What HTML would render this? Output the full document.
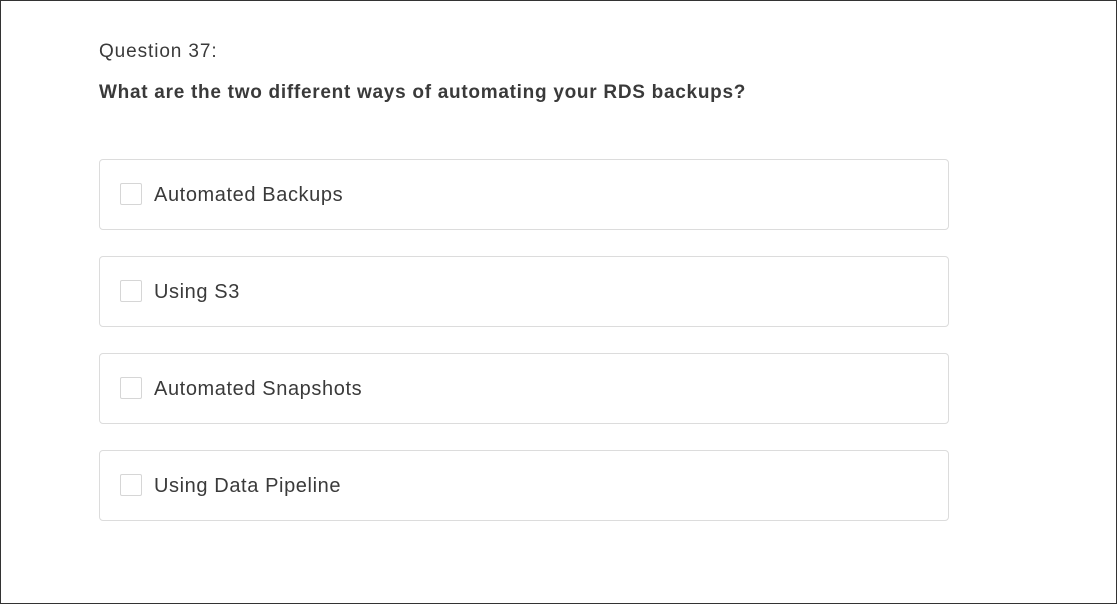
<!DOCTYPE html>
<html><head><style>
html,body{margin:0;padding:0;background:#fff;}
body{width:1117px;height:604px;position:relative;overflow:hidden;font-family:"Liberation Sans",sans-serif;color:#3c3c3c;}
.frame{position:absolute;left:0;top:0;width:1115px;height:602px;border:1px solid #333;}
.q{position:absolute;left:99px;top:41px;font-size:19px;color:#3a3a3a;letter-spacing:0.9px;}
.t{position:absolute;left:99px;top:82px;font-size:19px;font-weight:bold;color:#3a3a3a;letter-spacing:0.72px;}
.opt{position:absolute;left:99px;width:848px;height:69px;border:1px solid #dcdcdc;border-radius:4px;}
.cb{position:absolute;left:20px;top:23px;width:20px;height:20px;border:1px solid #d6d6d6;border-radius:2px;}
.lb{position:absolute;left:54px;top:24px;font-size:20px;color:#3a3a3a;letter-spacing:0.6px;}
</style></head><body>
<div class="frame"></div>
<div class="q">Question 37:</div>
<div class="t">What are the two different ways of automating your RDS backups?</div>
<div class="opt" style="top:159px"><div class="cb"></div><div class="lb">Automated Backups</div></div>
<div class="opt" style="top:256px"><div class="cb"></div><div class="lb">Using S3</div></div>
<div class="opt" style="top:353px"><div class="cb"></div><div class="lb">Automated Snapshots</div></div>
<div class="opt" style="top:450px"><div class="cb"></div><div class="lb">Using Data Pipeline</div></div>
</body></html>
